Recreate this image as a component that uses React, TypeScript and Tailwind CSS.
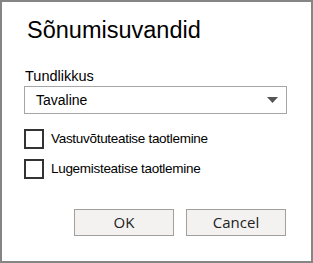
import React from "react";

const Check = ({ label }: { label: string }) => (
  <label className="flex items-center gap-[7px] h-[20px]">
    <span className="w-[20px] h-[20px] border-2 border-[#333333] bg-white shrink-0" />
    <span className="text-[13.5px] text-black tracking-[-0.3px]">{label}</span>
  </label>
);

export default function App() {
  return (
    <div
      className="w-[313px] h-[263px] border-2 border-[#858585] bg-white flex flex-col"
      style={{ fontFamily: '"Liberation Sans", Arial, sans-serif' }}
    >
      <h1 className="ml-[25px] mt-[14px] text-[23.5px] leading-[28px] text-black">Sõnumisuvandid</h1>
      <div className="ml-[23px] mt-[24px] text-[14.5px] leading-[16px] text-black">Tundlikkus</div>
      <div className="ml-[22px] mt-[2px] w-[263px] h-[28px] border border-[#a6a6a6] flex items-center justify-between pl-[11px] pr-[8px]">
        <span className="text-[14px] text-black">Tavaline</span>
        <svg width="11" height="6" viewBox="0 0 11 6">
          <path d="M0 0h11L5.5 6z" fill="#555555" />
        </svg>
      </div>
      <div className="ml-[22px] mt-[15px] flex flex-col gap-[10px]">
        <Check label="Vastuvõtuteatise taotlemine" />
        <Check label="Lugemisteatise taotlemine" />
      </div>
      <div className="mt-[30px] ml-[72px] flex gap-[12px]">
        <button className="w-[100px] h-[27px] border border-[#a19f9d] bg-[#f3f2f1] text-[15px] text-[#222] leading-none" style={{ fontFamily: '"Open Sans", "Liberation Sans", sans-serif' }}>OK</button>
        <button className="w-[100px] h-[27px] border border-[#a19f9d] bg-[#f3f2f1] text-[15px] text-[#222] leading-none" style={{ fontFamily: '"Open Sans", "Liberation Sans", sans-serif' }}>Cancel</button>
      </div>
    </div>
  );
}
